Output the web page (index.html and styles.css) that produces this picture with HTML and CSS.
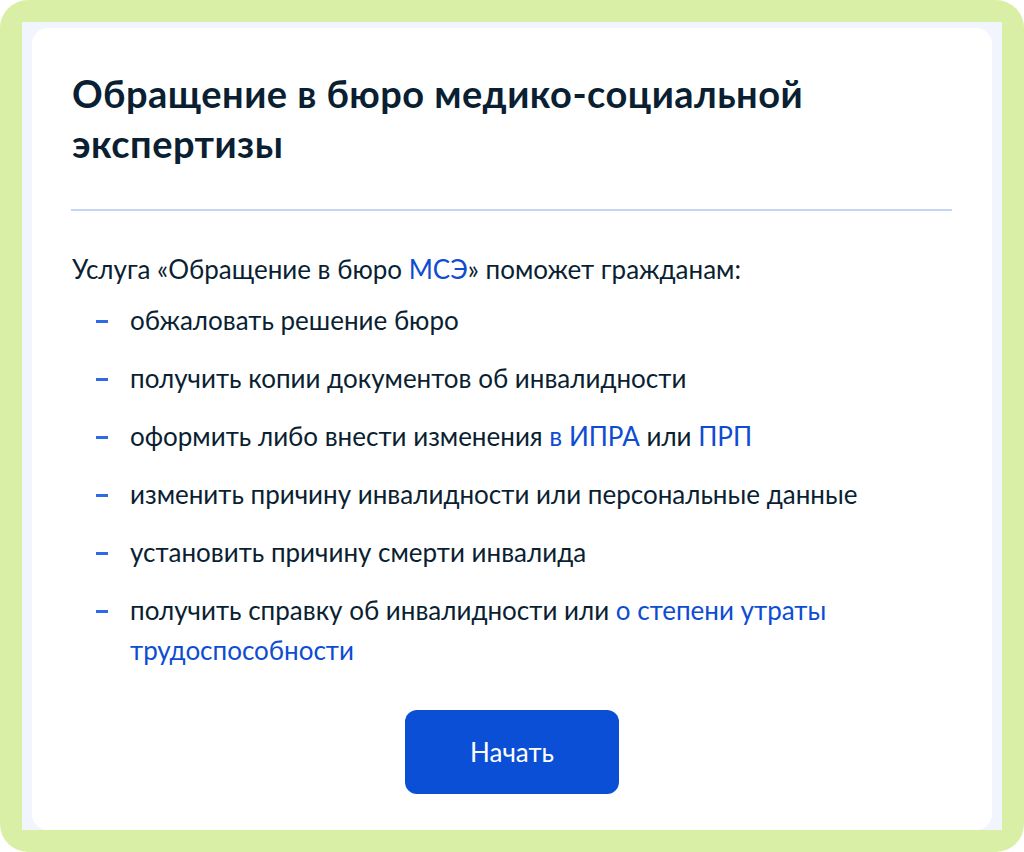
FILE: index.html
```html
<!DOCTYPE html>
<html lang="ru">
<head>
    <meta charset="UTF-8">
    <meta name="viewport" content="width=device-width, initial-scale=1.0">
    <title>Обращение в бюро МСЭ</title>
    <link rel="stylesheet" href="styles.css">
</head>
<body>
    <div class="frame">
        <div class="frame-inner">
            <div class="card">
                <h1 class="card-title">Обращение в бюро медико-социальной экспертизы</h1>
                <div class="divider"></div>
                <p class="card-lead">Услуга «Обращение в бюро <a href="#" class="link">МСЭ</a>» поможет гражданам:</p>
                <ul class="card-list">
                    <li>обжаловать решение бюро</li>
                    <li>получить копии документов об инвалидности</li>
                    <li>оформить либо внести изменения <a href="#" class="link">в ИПРА</a> или <a href="#" class="link">ПРП</a></li>
                    <li>изменить причину инвалидности или персональные данные</li>
                    <li>установить причину смерти инвалида</li>
                    <li>получить справку об инвалидности или <a href="#" class="link">о степени утраты трудоспособности</a></li>
                </ul>
                <div class="card-footer">
                    <button class="start-button">Начать</button>
                </div>
            </div>
        </div>
    </div>
</body>
</html>
```

FILE: styles.css
```css
body{
    margin: 0;
    background-color: #fff;
    font-family: Lato, "Noto Sans", sans-serif;
    color: #0b1f33;
}
.frame{
    height: 852px;
    box-sizing: border-box;
    padding: 22px 22px 22px 22px;
    background-color: #d9efa6;
    border-radius: 28px;
}
.frame-inner{
    height: 100%;
    box-sizing: border-box;
    padding: 6px 10px 0 10px;
    background-color: #f1f5fd;
}
.card{
    height: 100%;
    box-sizing: border-box;
    padding: 40px 40px 0 40px;
    background-color: #fff;
    border-radius: 16px;
}
.card-title{
    margin: 0;
    font-size: 38px;
    line-height: 50px;
    font-weight: 700;
    letter-spacing: 0.45px;
}
.divider{
    height: 2px;
    margin: 41px 0 0 -1px;
    background-color: #c6d5f5;
}
.card-lead{
    margin: 38px 0 0 0;
    font-size: 26px;
    line-height: 40px;
}
.link{
    color: #0d4cd3;
    text-decoration: none;
}

/***************** -list- *******************/

.card-list{
    list-style: none;
    margin: 11px 0 0 0;
    padding: 0 0 0 58px;
    font-size: 26px;
    line-height: 40px;
}
.card-list li{
    position: relative;
    margin-bottom: 18px;
}
.card-list li:last-child{
    margin-bottom: 0;
}
.card-list li::before{
    content: "";
    position: absolute;
    left: -34px;
    top: 20px;
    width: 12px;
    height: 3px;
    background-color: #2f6ae6;
}

/***************** -button- *******************/

.card-footer{
    display: flex;
    justify-content: center;
    margin-top: 40px;
}
.start-button{
    width: 214px;
    height: 84px;
    border: none;
    border-radius: 12px;
    background-color: #0b4fd6;
    color: #fff;
    font-family: Lato, "Noto Sans", sans-serif;
    font-size: 26px;
}
```
